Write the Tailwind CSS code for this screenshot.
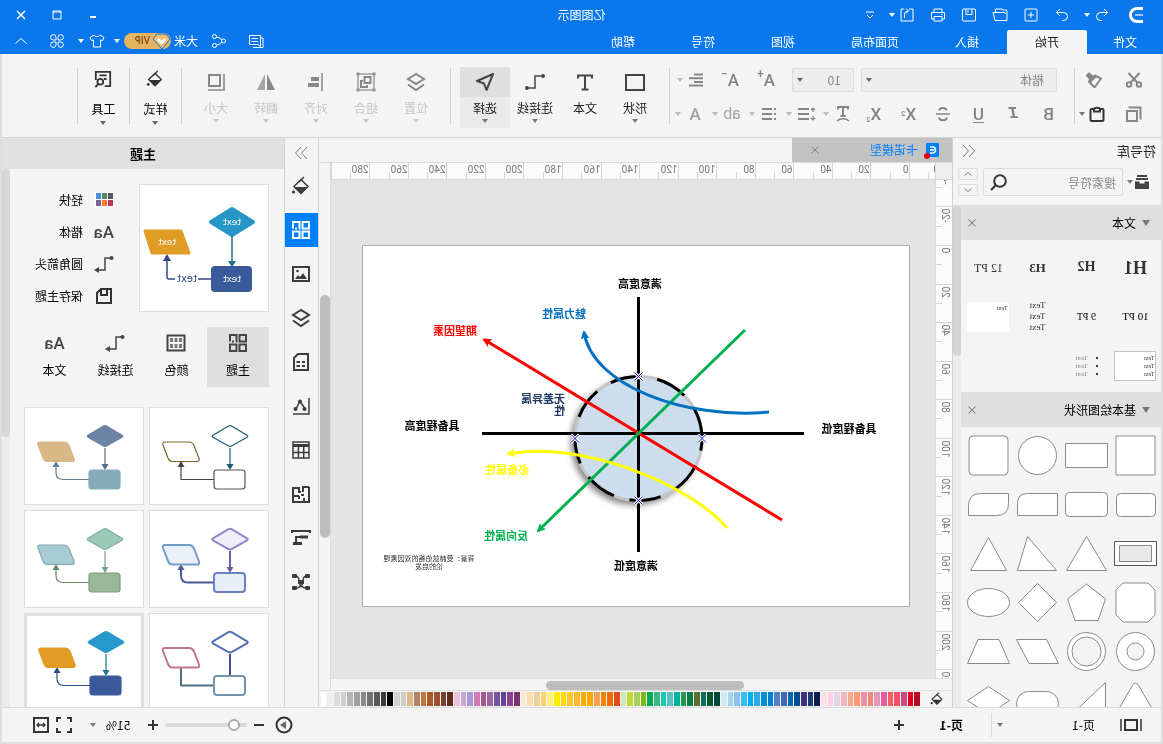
<!DOCTYPE html>
<html lang="zh-CN">
<head>
<meta charset="utf-8">
<title>亿图图示</title>
<script src="https://cdn.jsdelivr.net/npm/@tailwindcss/browser@4"></script>
</head>
<body class="h-screen overflow-hidden bg-[#dedede]">
<svg class="hidden" xmlns="http://www.w3.org/2000/svg">
  <symbol id="undo" viewBox="0 0 16 16"><path d="M6 2 2.500 5.500 6 9M3 5.500h6.500a3.800 3.800 0 0 1 0 8H8"/></symbol>
  <symbol id="redo" viewBox="0 0 16 16"><path d="M10 2l3.500 3.500L10 9M13 5.500H6.500a3.800 3.800 0 0 0 0 8H8"/></symbol>
  <symbol id="newdoc" viewBox="0 0 16 16"><rect x="2" y="2" width="12" height="12" rx="1"/><path d="M8 5v6M5 8h6"/></symbol>
  <symbol id="folder" viewBox="0 0 16 16"><path d="M1 13.500V4a1 1 0 0 1 1-1h3l1-1h6.500v3.500M1 13.500h12l2-8H4L2 6.500"/></symbol>
  <symbol id="save" viewBox="0 0 16 16"><rect x="1.500" y="2" width="13" height="12" rx="1"/><path d="M5 2v5.500h6V2M9 3.500v2"/></symbol>
  <symbol id="print" viewBox="0 0 16 16"><path d="M4 5V2h8v3M4 12H1.500V5.500h13V12H12M4 9.500h8V14H4zM3.500 7.500h1.500"/></symbol>
  <symbol id="export" viewBox="0 0 16 16"><path d="M6 2H2v12h12V2h-3M10.500 11V7.500C10.500 5 8.500 4 6.500 4M9 1.500 6.500 4 9 6.500"/></symbol>
  <symbol id="caret" viewBox="0 0 8 4"><path d="M1 0h6L4 4z" fill="currentColor" stroke="none"/></symbol>
  <symbol id="msg" viewBox="0 0 16 16"><path d="M3.500 2.500h11v9H6l-2.500 2zM1 14.500V5h2.500M1 14.500h10M6 5.500h6.500M6 8.500h6.500"/></symbol>
  <symbol id="share" viewBox="0 0 16 16"><circle cx="3.500" cy="8" r="2"/><circle cx="12.500" cy="3.500" r="2"/><circle cx="12.500" cy="12.500" r="2"/><path d="M5.300 7 7 5l3.500-1M5.300 9 7 11l3.500 1"/></symbol>
  <symbol id="shirt" viewBox="0 0 16 16"><path d="M5 2 1 4.500l1.500 3L4.500 7v7h7V7l2 .500 1.500-3L11 2c-1 2-5 2-6 0z"/></symbol>
  <symbol id="clover" viewBox="0 0 16 16"><path d="M7 7H4.500A2.700 2.700 0 1 1 7 4.500zM9 7V4.500A2.700 2.700 0 1 1 11.500 7zM7 9v2.500A2.700 2.700 0 1 1 4.500 9zM9 9h2.500A2.700 2.700 0 1 1 9 11.500z"/></symbol>
  <symbol id="up" viewBox="0 0 16 16"><path d="M2.500 10.500 8 5.500l5.500 5"/></symbol>
  <symbol id="down" viewBox="0 0 16 16"><path d="M2.500 5.500 8 10.500l5.500-5"/></symbol>
  <symbol id="close" viewBox="0 0 16 16"><path d="M4 4l8 8M12 4l-8 8"/></symbol>
  <symbol id="dbl" viewBox="0 0 16 16"><path d="M8 2 2.500 8 8 14M14 2 8.500 8l5.500 6"/></symbol>
  <symbol id="cut" viewBox="0 0 16 16"><circle cx="3" cy="12.500" r="2.300"/><circle cx="13" cy="12.500" r="2.300"/><path d="M2.500 1 11.500 10.800M13.500 1 4.500 10.800"/></symbol>
  <symbol id="copy" viewBox="0 0 16 16"><rect x="5" y="5" width="10" height="10"/><path d="M2 12.500H1.500V1.500h11V2"/></symbol>
  <symbol id="brush" viewBox="0 0 16 16"><path d="M13 1.500 15 3.500 12 7 9.500 4.500z" fill="currentColor"/><path d="M7 3.500 13 9.500 7.500 15.500 1 6.500z"/><path d="M6 4l7 7" /></symbol>
  <symbol id="paste" viewBox="0 0 16 16"><rect x="1.500" y="3" width="13" height="12" rx="1"/><path d="M5 5.500V3.500C5 1 11 1 11 3.500v2z" fill="#f4f4f4"/></symbol>
  <symbol id="lines" viewBox="0 0 16 16"><path d="M1 2.500h9M1 6.200h14M1 9.900h9M1 13.600h14"/></symbol>
  <symbol id="lineh" viewBox="0 0 20 16"><path d="M7 3h11M7 8h11M7 13h11"/><path d="M3 2v4M3 10v4M1 4l2-2 2 2M1 12l2 2 2-2" stroke-width="1.200"/></symbol>
  <symbol id="list" viewBox="0 0 16 16"><path d="M5 3h10M5 8h10M5 13h10M1 3h2M1 8h2M1 13h2"/></symbol>
  <symbol id="textarc" viewBox="0 0 16 18"><path d="M3 4.500V2h10v2.500M8 2v9M5.500 11h5"/><path d="M2 16c3-3 9-3 12 0" stroke-width="1.500"/></symbol>
  <symbol id="strike" viewBox="0 0 16 16"><path d="M12 4.500C11 1 4.500 1 4.500 4.500M4 11.500C5 15.500 12 15 12 11.500"/><path d="M1 8h14" stroke-width="1.500"/></symbol>
  <symbol id="conn" viewBox="0 0 20 18"><path d="M4 3h6v12h6" /><circle cx="2" cy="3" r="2" fill="currentColor" stroke="none"/><circle cx="18" cy="15" r="2" fill="currentColor" stroke="none"/></symbol>
  <symbol id="conn2" viewBox="0 0 20 18"><path d="M4 3h5v12h7" stroke-width="1.500"/><circle cx="2.500" cy="3" r="2" fill="currentColor" stroke="none"/><path d="M15 12v6l5-3z" fill="currentColor" stroke="none"/></symbol>
  <symbol id="point" viewBox="0 0 20 20"><path d="M2 2 18 9 11 11.500 8.500 18z" stroke-linejoin="round"/></symbol>
  <symbol id="layers" viewBox="0 0 20 20"><path d="M10 2 18 7l-8 5-8-5zM2 12.500l8 5.500 8-5.500"/></symbol>
  <symbol id="group" viewBox="0 0 20 20"><g stroke-width="1.200"><rect x="2" y="2" width="16" height="16"/><g fill="#f4f4f4"><circle cx="2" cy="2" r="1.200"/><circle cx="18" cy="2" r="1.200"/><circle cx="2" cy="18" r="1.200"/><circle cx="18" cy="18" r="1.200"/></g></g><rect x="5.500" y="5" width="6" height="6"/><path d="M13 9h2v6H9v-2"/></symbol>
  <symbol id="align" viewBox="0 0 20 20"><path d="M4 1v18" stroke-width="1.500"/><g fill="currentColor" stroke="none"><rect x="7" y="5" width="8" height="4"/><rect x="7" y="11" width="11" height="4"/></g></symbol>
  <symbol id="flip" viewBox="0 0 20 20"><path d="M9 2v16H1z" fill="currentColor" stroke="none"/><path d="M11 2v16h8z" fill="currentColor" fill-opacity=".75" stroke="none"/></symbol>
  <symbol id="size" viewBox="0 0 20 20"><rect x="6" y="3" width="11" height="11"/><path d="M2 2v16h16" stroke-width="1.600"/></symbol>
  <symbol id="bucket" viewBox="0 0 20 20"><path d="M10 3.500 17 10.500 10 17.500 3 10.500zM7 1l5 5"/><path d="M3 11h14l-7 7z" fill="currentColor" stroke="none"/><circle cx="17.500" cy="16" r="1.600" fill="currentColor" stroke="none"/></symbol>
  <symbol id="tools" viewBox="0 0 20 20"><path d="M8 18H2V2h16v9M6 6h8M6 10h3"/><circle cx="13" cy="13" r="3.200"/><path d="M15.200 15.500 18.500 19"/></symbol>
  <symbol id="find" viewBox="0 0 18 18"><circle cx="8" cy="8" r="5.800"/><path d="m12 12 5 5"/></symbol>
  <symbol id="box" viewBox="0 0 16 16"><g fill="currentColor" stroke="none"><path d="M3 1h10v2H3zM2 4h12v2H2z"/><path d="M1 7.500h4.500v2h5v-2H15V15H1z"/></g></symbol>
  <symbol id="theme" viewBox="0 0 20 20"><rect x="2" y="2" width="6.500" height="6.500"/><rect x="11.500" y="2" width="6.500" height="6.500" stroke-dasharray="13 2 2 2 7"/><rect x="2" y="11.500" width="6.500" height="6.500"/><rect x="11.500" y="11.500" width="6.500" height="6.500"/></symbol>
  <symbol id="image" viewBox="0 0 20 20"><rect x="2" y="3" width="16" height="14"/><path d="M4 15l4-6 3 4 2-2 3 4z" fill="currentColor" stroke="none"/><circle cx="13.500" cy="7" r="1.300" fill="currentColor" stroke="none"/></symbol>
  <symbol id="doc" viewBox="0 0 20 20"><path d="M3 2h10l4 4v12H3zM6 10h3M11 10h3.500M6 14h3M11 14h3.500"/></symbol>
  <symbol id="chart" viewBox="0 0 20 20"><path d="M2 2v16h16M6 13l5-8 4 8" /><g fill="currentColor" stroke="none"><circle cx="6.500" cy="13" r="2"/><circle cx="11" cy="5.500" r="2"/><circle cx="15.500" cy="13" r="2"/></g></symbol>
  <symbol id="table" viewBox="0 0 20 20"><rect x="2" y="2" width="16" height="16"/><path d="M2 5.500h16" stroke-width="3"/><path d="M2 12.500h16M7.300 7v11M12.600 7v11"/></symbol>
  <symbol id="plan" viewBox="0 0 20 20"><path d="M2 3h6v5M2 3v15h16V4h-6v4h-2M7 14v4M7 11h3M12 12h6M12 12v3"/></symbol>
  <symbol id="gantt" viewBox="0 0 20 20"><path d="M1 3h18M1 2v3M19 2v3M10 9H15v5" stroke-width="2"/><path d="M9 15.500h9M3 9h8" stroke-width="3"/></symbol>
  <symbol id="mind" viewBox="0 0 20 20"><path d="M4 4c6 0 2 6 6 6s0 6-6 6M16 4c-6 0-2 6-6 6s0 6 6 6" stroke-width="1.400"/><g fill="currentColor" stroke="none"><rect x="1" y="2" width="5" height="4" rx="1"/><rect x="14" y="2" width="5" height="4" rx="1"/><rect x="1" y="14" width="5" height="4" rx="1"/><rect x="14" y="14" width="5" height="4" rx="1"/><rect x="7" y="8" width="6" height="4"/></g></symbol>
  <symbol id="palette" viewBox="0 0 20 18"><rect x="1.500" y="1.500" width="17" height="15"/><g fill="#777" stroke="none"><rect x="4" y="4" width="3" height="4"/><rect x="8.500" y="4" width="3" height="4"/><rect x="13" y="4" width="3" height="4"/><rect x="4" y="10" width="3" height="4"/><rect x="8.500" y="10" width="3" height="4"/><rect x="13" y="10" width="3" height="4"/></g></symbol>
  <symbol id="save2" viewBox="0 0 18 18"><path d="M2 2h10l4 4v10H2zM6 2v6h6V3"/></symbol>
  <symbol id="pages" viewBox="0 0 22 14"><path d="M1 1v12M21 1v12" stroke-width="1.500"/><rect x="5" y="2" width="12" height="10"/></symbol>
  <symbol id="full" viewBox="0 0 16 16"><path d="M1 5V1h4M11 1h4v4M15 11v4h-4M5 15H1v-4"/></symbol>
  <symbol id="fit" viewBox="0 0 16 16"><rect x="1" y="1" width="14" height="14"/><path d="M4 8h8M6 6 4 8l2 2M10 6l2 2-2 2" stroke-width="1.400"/></symbol>
  <symbol id="play" viewBox="0 0 18 18"><circle cx="9" cy="9" r="7.500"/><path d="M7 5v8l6-4z" fill="#666" stroke="none"/></symbol>
</svg>

<!-- The whole window is shown mirrored left to right -->
<div class="flex h-screen -scale-x-100 flex-col overflow-hidden pb-0.5 font-['Noto_Sans_CJK_SC',sans-serif] text-xs text-[#222]">
  <header class="shrink-0 bg-[#0a77ec] text-white">
    <div class="grid h-[30px] grid-cols-[1fr_auto_1fr] items-center">
      <div class="flex items-center pl-[19px]">
        <svg class="h-4 w-4 shrink-0 fill-none" viewBox="0 0 16 16"><path d="M1 1.500h6a6.500 6.500 0 0 1 0 13H1" stroke="#fff" stroke-width="3"/><path d="M1 8h8" stroke="#9cc9fa" stroke-width="2"/></svg>
        <button aria-label="撤销" class="ml-[18px] w-4"><svg class="size-4 fill-none stroke-current"><use href="#undo"/></svg></button>
        <button aria-label="撤销列表" class="ml-[3px] w-2"><svg class="h-1 w-2"><use href="#caret"/></svg></button>
        <button aria-label="重做" class="ml-[13px] w-4"><svg class="size-4 fill-none stroke-current"><use href="#redo"/></svg></button>
        <div class="ml-[15px] flex gap-[15px]">
          <button aria-label="新建"><svg class="size-4 fill-none stroke-current"><use href="#newdoc"/></svg></button>
          <button aria-label="打开"><svg class="size-4 fill-none stroke-current"><use href="#folder"/></svg></button>
          <button aria-label="保存"><svg class="size-4 fill-none stroke-current"><use href="#save"/></svg></button>
          <button aria-label="打印"><svg class="size-4 fill-none stroke-current"><use href="#print"/></svg></button>
          <button aria-label="导出"><svg class="size-4 fill-none stroke-current"><use href="#export"/></svg></button>
        </div>
        <button aria-label="导出列表" class="ml-[3px] w-2"><svg class="h-1 w-2"><use href="#caret"/></svg></button>
        <button aria-label="更多" class="ml-[14px] w-2"><svg class="h-2 w-2 fill-none stroke-current" viewBox="0 0 8 8"><path d="M0 1h8M1 4l3 3 3-3"/></svg></button>
      </div>
      <h1>亿图图示</h1>
      <div class="flex items-center justify-end gap-5 pr-[13px]">
        <button aria-label="最小化"><svg class="size-4 fill-none stroke-current" viewBox="0 0 16 16"><path d="M5 10h6" stroke-width="2"/></svg></button>
        <button aria-label="最大化"><svg class="size-4 fill-none stroke-current" viewBox="0 0 16 16"><path d="M4 4h8v8H4zM4 5h8"/></svg></button>
        <button aria-label="关闭"><svg class="size-4 fill-none stroke-current" viewBox="0 0 16 16"><path d="m4 4 8 8m0-8-8 8" stroke-width="1.400"/></svg></button>
      </div>
    </div>
    <div class="flex h-6 items-stretch">
      <nav class="flex">
        <button class="w-19 leading-6">文件</button>
        <button class="w-20 rounded-t-xs bg-[#f4f4f4] leading-6 text-[#222]">开始</button>
        <button class="px-7 leading-6">插入</button>
        <button class="px-7 leading-6">页面布局</button>
        <button class="px-7 leading-6">视图</button>
        <button class="px-7 leading-6">符号</button>
        <button class="px-7 leading-6">帮助</button>
      </nav>
      <div class="ml-auto flex items-center pr-[13px] pb-0.5">
        <button aria-label="评论" class="mr-[21px]"><svg class="size-4 fill-none stroke-current"><use href="#msg"/></svg></button>
        <button aria-label="分享" class="mr-[13px]"><svg class="size-4 fill-none stroke-current"><use href="#share"/></svg></button>
        <a href="#" class="mr-[3px]">大米</a>
        <a href="#" class="flex h-4 w-[47px] items-center rounded-full bg-[#e6b562] font-['Open_Sans',sans-serif] text-[10px] font-semibold text-[#7a4a12]">
          <svg class="h-4 w-[19px] fill-none" viewBox="0 0 19 16"><path d="M5 1h9l4 5-9 10L1 6z" fill="#f0be68" stroke="#0a77ec"/><path d="m5.500 6 4 4 4-4" stroke="#fff" stroke-width="2.500"/></svg>
          <span class="pl-0.5">VIP</span>
        </a>
        <svg class="mr-1 ml-[3px] h-1 w-2"><use href="#caret"/></svg>
        <button aria-label="皮肤" class="ml-1"><svg class="size-4 fill-none stroke-current"><use href="#shirt"/></svg></button>
        <svg class="ml-1 h-1 w-2"><use href="#caret"/></svg>
        <button aria-label="应用" class="ml-3"><svg class="size-4 fill-none stroke-current"><use href="#clover"/></svg></button>
        <button aria-label="收起" class="ml-5"><svg class="size-4 fill-none stroke-current"><use href="#up"/></svg></button>
      </div>
    </div>
  </header>

  <div class="mx-0.5 flex min-h-0 flex-1 flex-col bg-[#f4f4f4]">
    <!-- Ribbon -->
    <section class="flex h-[84px] shrink-0 items-start border-b border-[#d0d0d0] pt-3.5 text-[#858585]">
      <div class="flex h-14 flex-col gap-2.5 border-r border-[#cdcdcd] pr-[3px] pl-[11px]">
        <div class="flex gap-2">
          <button aria-label="剪切" class="flex h-6 w-8 items-center justify-center"><svg class="size-4 fill-none stroke-current stroke-2"><use href="#cut"/></svg></button>
          <button aria-label="格式刷" class="flex h-6 w-8 items-center justify-center"><svg class="size-4 fill-none stroke-current stroke-2"><use href="#brush"/></svg></button>
        </div>
        <div class="flex">
          <button aria-label="复制" class="flex h-6 w-8 items-center justify-center"><svg class="size-4 fill-none stroke-current stroke-2"><use href="#copy"/></svg></button>
          <button aria-label="粘贴" class="ml-[13px] flex h-6 items-center gap-[3px] text-[#333]"><svg class="size-4 fill-none stroke-current stroke-2"><use href="#paste"/></svg><svg class="h-1 w-2 text-[#777]"><use href="#caret"/></svg></button>
        </div>
      </div>
      <div class="flex h-14 flex-col gap-2.5 border-r border-[#cdcdcd] pr-1 pl-2">
        <div class="flex pl-[9px]">
          <div class="relative"><select aria-label="字体" class="h-6 w-49 appearance-none rounded-xs border border-[#dcdcdc] bg-[#ededed] pl-3 text-[#888]"><option>楷体</option></select><svg class="pointer-events-none absolute top-2.5 right-1 h-1 w-2 text-[#666]"><use href="#caret"/></svg></div>
          <div class="relative ml-[7px]"><select aria-label="字号" class="h-6 w-[62px] appearance-none rounded-xs border border-[#dcdcdc] bg-[#ededed] pl-3 text-[#888]"><option>10</option></select><svg class="pointer-events-none absolute top-2.5 right-1 h-1 w-2 text-[#666]"><use href="#caret"/></svg></div>
          <button aria-label="增大字号" class="ml-2 flex h-6 w-9 items-center justify-center font-['Roboto',sans-serif] text-[17px] font-medium">A<sup class="text-[12px]">+</sup></button>
          <button aria-label="减小字号" class="flex h-6 w-9 items-center justify-center font-['Roboto',sans-serif] text-[17px] font-medium">A<sup class="text-[12px]">−</sup></button>
          <button aria-label="对齐文本" class="flex h-6 w-9 items-center justify-end gap-1"><svg class="size-4 fill-none stroke-current stroke-2"><use href="#lines"/></svg><svg class="h-1 w-2 text-[#bbb]"><use href="#caret"/></svg></button>
        </div>
        <div class="flex font-['Roboto',sans-serif] text-[17px] leading-6">
          <button class="w-[35px] font-medium" aria-label="加粗">B</button>
          <button class="w-[35px] font-['Liberation_Mono',monospace] font-bold italic" aria-label="斜体">I</button>
          <button class="w-[35px] font-medium underline underline-offset-2" aria-label="下划线">U</button>
          <button class="flex w-[35px] items-center justify-center" aria-label="删除线"><svg class="size-4 fill-none stroke-current stroke-2"><use href="#strike"/></svg></button>
          <button class="w-[35px] font-medium" aria-label="上标">X<sup class="text-[8px]">2</sup></button>
          <button class="w-[35px] font-medium" aria-label="下标">X<sub class="text-[8px]">2</sub></button>
          <button class="mr-[3px] flex h-6 items-center" aria-label="文字样式"><svg class="mx-[5px] h-[18px] w-4 fill-none stroke-current stroke-2"><use href="#textarc"/></svg><svg class="h-1 w-2 text-[#bbb]"><use href="#caret"/></svg></button>
          <button class="mr-[3px] flex h-6 items-center" aria-label="行距"><svg class="mx-[3px] h-4 w-5 fill-none stroke-current stroke-2"><use href="#lineh"/></svg><svg class="h-1 w-2 text-[#bbb]"><use href="#caret"/></svg></button>
          <button class="mr-[3px] flex h-6 items-center" aria-label="列表"><svg class="mx-[5px] size-4 fill-none stroke-current stroke-2"><use href="#list"/></svg><svg class="h-1 w-2 text-[#bbb]"><use href="#caret"/></svg></button>
          <button class="mr-[3px] flex h-6 items-center text-[#a5a5a5]" aria-label="突出显示"><span class="w-[26px] text-[16px]">ab</span><svg class="h-1 w-2 text-[#bbb]"><use href="#caret"/></svg></button>
          <button class="flex h-6 items-center text-[#a0a0a0]" aria-label="字体颜色"><span class="w-[26px] font-medium">A</span><svg class="h-1 w-2 text-[#bbb]"><use href="#caret"/></svg></button>
        </div>
      </div>
      <div class="flex h-14 items-start border-r border-[#cdcdcd] px-[9px] text-[#222]">
        <button class="-mt-px flex h-[61px] w-[50px] flex-col items-center"><span class="flex h-7.5 items-center"><svg class="size-5 fill-none stroke-[#444] stroke-2" viewBox="0 0 20 20"><rect x="1" y="3" width="18" height="15"/></svg></span><span class="my-0.5 leading-4.5">形状</span><svg class="h-1 w-2 shrink-0 text-[#777]"><use href="#caret"/></svg></button>
        <button class="-mt-px flex h-[61px] w-[50px] flex-col items-center"><span class="flex h-7.5 items-center"><svg class="size-5 fill-none stroke-[#444] stroke-2" viewBox="0 0 20 20"><path d="M3 6.500V3.500h14v3M10 3.500v14M6.500 17.500h7"/></svg></span><span class="my-0.5 leading-4.5">文本</span></button>
        <button class="-mt-px flex h-[61px] w-[50px] flex-col items-center"><span class="flex h-7.5 items-center"><svg class="h-[18px] w-5 fill-none stroke-current text-[#444] stroke-[1.5]"><use href="#conn"/></svg></span><span class="my-0.5 leading-4.5">连接线</span><svg class="h-1 w-2 shrink-0 text-[#777]"><use href="#caret"/></svg></button>
        <button class="-mt-px flex h-[61px] w-[50px] flex-col items-center rounded-xs bg-[#eaeaea]"><span class="flex h-7.5 w-full items-center justify-center bg-[#dfdfdf]"><svg class="size-5 fill-none stroke-[#444] stroke-2"><use href="#point"/></svg></span><span class="my-0.5 leading-4.5">选择</span><svg class="h-1 w-2 shrink-0 text-[#777]"><use href="#caret"/></svg></button>
      </div>
      <div class="flex h-14 items-start border-r border-[#cdcdcd] px-[9px] text-[#c6c6c6]">
        <button disabled class="-mt-px flex h-[61px] w-[50px] flex-col items-center"><span class="flex h-7.5 items-center"><svg class="size-5 fill-none stroke-[#888] stroke-2"><use href="#layers"/></svg></span><span class="my-0.5 leading-4.5">位置</span><svg class="h-1 w-2 shrink-0"><use href="#caret"/></svg></button>
        <button disabled class="-mt-px flex h-[61px] w-[50px] flex-col items-center"><span class="flex h-7.5 items-center"><svg class="size-5 fill-none stroke-[#888] stroke-2"><use href="#group"/></svg></span><span class="my-0.5 leading-4.5">组合</span><svg class="h-1 w-2 shrink-0"><use href="#caret"/></svg></button>
        <button disabled class="-mt-px flex h-[61px] w-[50px] flex-col items-center"><span class="flex h-7.5 items-center"><svg class="size-5 fill-none stroke-current text-[#888]"><use href="#align"/></svg></span><span class="my-0.5 leading-4.5">对齐</span><svg class="h-1 w-2 shrink-0"><use href="#caret"/></svg></button>
        <button disabled class="-mt-px flex h-[61px] w-[50px] flex-col items-center"><span class="flex h-7.5 items-center"><svg class="size-5 text-[#888]"><use href="#flip"/></svg></span><span class="my-0.5 leading-4.5">翻转</span><svg class="h-1 w-2 shrink-0"><use href="#caret"/></svg></button>
        <button disabled class="-mt-px flex h-[61px] w-[50px] flex-col items-center"><span class="flex h-7.5 items-center"><svg class="size-5 fill-none stroke-[#888] stroke-2"><use href="#size"/></svg></span><span class="my-0.5 leading-4.5">大小</span><svg class="h-1 w-2 shrink-0"><use href="#caret"/></svg></button>
      </div>
      <div class="flex h-14 items-start border-r border-[#cdcdcd] text-black">
        <button class="-mt-px flex h-[61px] w-[51px] flex-col items-center"><span class="flex h-6 items-center"><svg class="size-[18px] fill-none stroke-current text-[#333] stroke-[1.5]"><use href="#bucket"/></svg></span><span class="mt-[9px] mb-[3px] leading-4.5">样式</span><svg class="h-1 w-2 shrink-0 text-[#666]"><use href="#caret"/></svg></button>
      </div>
      <div class="flex h-14 items-start border-r border-[#cdcdcd] text-black">
        <button class="-mt-px flex h-[61px] w-[51px] flex-col items-center"><span class="flex h-6 items-center"><svg class="size-[18px] fill-none stroke-[#333] stroke-2"><use href="#tools"/></svg></span><span class="mt-[9px] mb-[3px] leading-4.5">工具</span><svg class="h-1 w-2 shrink-0 text-[#666]"><use href="#caret"/></svg></button>
      </div>
    </section>

    <div class="flex min-h-0 flex-1">
      <!-- Symbol library -->
      <aside class="flex w-[209px] shrink-0 flex-col border-r border-[#cfcfcf]">
        <div class="flex h-[26px] items-center justify-between pr-2 pl-[5px]"><h2 class="text-[13px]">符号库</h2><button aria-label="折叠"><svg class="size-4 fill-none stroke-[#777]"><use href="#dbl"/></svg></button></div>
        <div class="flex h-[41px] items-start gap-[5px] pt-1 pl-[11px]">
          <button aria-label="符号库菜单" class="flex h-7 w-[22px] items-center"><svg class="size-4 shrink-0 text-[#444]"><use href="#box"/></svg><svg class="h-1 w-2 shrink-0 text-[#777]"><use href="#caret"/></svg></button>
          <label class="flex h-7 w-[140px] items-center rounded-xs border border-[#dcdcdc] pr-1.5"><input aria-label="搜索符号" placeholder="搜索符号" class="h-6 w-full min-w-0 bg-transparent pl-1.5 outline-none placeholder:text-[#888]"><svg class="size-[18px] shrink-0 fill-none stroke-[#333] stroke-2"><use href="#find"/></svg></label>
          <div class="flex flex-col gap-1"><button aria-label="上一个" class="flex h-3 w-5 items-center justify-center rounded-xs border border-[#dcdcdc]"><svg class="size-2.5 fill-none stroke-[#666] stroke-[1.5]"><use href="#up"/></svg></button><button aria-label="下一个" class="flex h-3 w-5 items-center justify-center rounded-xs border border-[#dcdcdc]"><svg class="size-2.5 fill-none stroke-[#666] stroke-[1.5]"><use href="#down"/></svg></button></div>
        </div>
        <div class="flex min-h-0 flex-1">
          <div class="min-w-0 flex-1 overflow-hidden">
            <div class="flex h-[35px] items-center bg-[#dfdfdf] pr-1 pl-[11px] text-black"><svg class="mr-1.5 h-1.5 w-2 text-[#777]" viewBox="0 0 8 6"><path d="M0 0h8L4 6z" fill="currentColor"/></svg>文本<button aria-label="关闭文本" class="ml-auto"><svg class="size-3.5 fill-none stroke-[#777] stroke-[1.2]"><use href="#close"/></svg></button></div>
            <div class="grid h-[152px] auto-rows-[49px] grid-cols-[repeat(4,49px)] place-items-center pt-[3px] pl-px font-['Liberation_Serif',serif] text-[#333]">
              <b class="text-[18px]">H1</b><b class="text-[14px]">H2</b><b class="text-[13px]">H3</b><span class="text-[12px] text-nowrap">12 PT</span>
              <span class="text-[11px] text-black">10 PT</span><span class="text-[10px] text-black">9 PT</span><span class="text-[9px] leading-[11px]">Text<br>Text<br>Text</span><span class="h-7.5 w-[42px] bg-white px-0.5 py-0.5 text-[6px] leading-2">Text</span>
              <span class="h-7.5 w-[42px] border border-[#c4c4c4] bg-white px-px py-0.5 text-[6px] leading-2">Text<br>Text<br>Text</span>
              <ul class="list-inside list-disc text-[7px] leading-2 text-[#888] marker:text-black"><li>Text</li><li>Text</li><li>Text</li></ul>
            </div>
            <div class="flex h-[35px] items-center bg-[#dfdfdf] pr-1 pl-[11px] text-black"><svg class="mr-1.5 h-1.5 w-2 text-[#777]" viewBox="0 0 8 6"><path d="M0 0h8L4 6z" fill="currentColor"/></svg>基本绘图形状<button aria-label="关闭基本绘图形状" class="ml-auto"><svg class="size-3.5 fill-none stroke-[#777] stroke-[1.2]"><use href="#close"/></svg></button></div>
            <div id="shapes" class="grid auto-rows-[49px] grid-cols-[repeat(4,49px)] pt-1 pl-px"></div>
          </div>
          <div class="w-2 shrink-0 bg-[#ececec]"><div class="h-[151px] rounded-full bg-[#d4d4d4]"></div></div>
        </div>
      </aside>

      <!-- Document -->
      <main class="flex min-w-0 flex-1 flex-col">
        <div class="flex h-[25px] shrink-0 border-b border-[#dadada]">
          <div class="flex w-[160px] items-center bg-[#c3c3c3] pl-3 text-[#0080ff]">
            <span class="relative mr-2 block size-3.5"><svg class="size-3.5" viewBox="0 0 14 14"><rect x="1" width="13" height="14" rx="1" fill="#0080ff"/><path d="M10 4H7.500a3 3 0 0 0 0 6H10M6 7h4" fill="none" stroke="#fff" stroke-width="1.500"/></svg><i class="absolute -right-0.5 -bottom-0.5 size-1.5 rounded-full bg-red-600"></i></span>
            卡诺模型<button aria-label="关闭文档" class="mr-4 ml-auto"><svg class="size-3.5 fill-none stroke-[#777]"><use href="#close"/></svg></button>
          </div>
        </div>
        <div class="flex min-h-0 flex-1">
          <div class="flex min-w-0 flex-1 flex-col">
            <div class="flex h-[17px] shrink-0 border-b border-[#dadada] bg-[#fbfbfb]">
              <div class="w-[17px] shrink-0 border-r border-[#dadada] bg-[#efefef]"></div>
              <svg id="hruler" class="h-4 min-w-0 flex-1 font-['Roboto',sans-serif] text-[10px]"></svg>
            </div>
            <div class="flex min-h-0 flex-1">
              <svg id="vruler" class="h-full w-[17px] shrink-0 border-r border-[#dadada] bg-[#fbfbfb] font-['Roboto',sans-serif] text-[10px]"></svg>
              <div class="min-w-0 flex-1 overflow-hidden bg-[#e4e4e4] pt-[65px] pl-[25px]">
                <svg class="h-[362px] w-[548px] border border-[#b0b0b0] bg-white text-[11px] font-bold" viewBox="255 246 546 360">
                  <defs>
                    <filter id="soft" x="-20%" y="-20%" width="140%" height="140%"><feGaussianBlur stdDeviation="3"/></filter>
                    <marker id="head" viewBox="0 0 10 10" refX="8" refY="5" markerWidth="9" markerHeight="9" markerUnits="userSpaceOnUse" orient="auto"><path d="M0 0 10 5 0 10 2.500 5z" fill="context-stroke"/></marker>
                  </defs>
                  <ellipse cx="529" cy="442" rx="64" ry="63" fill="#000" fill-opacity=".5" filter="url(#soft)"/>
                  <ellipse cx="525.500" cy="438.500" rx="63.500" ry="62" fill="#ccddee" stroke="#c6c6c6" stroke-width="3"/>
                  <path d="M462 438.500a63.500 62 0 1 1 127 0a63.500 62 0 1 1 -127 0" pathLength="360" fill="none" stroke="#000" stroke-width="3" stroke-dasharray="29 14.600"/>
                  <g fill="none" stroke-width="3">
                    <path d="M525.500 297v255M360 433.500h322" stroke="#000"/>
                    <path d="M382 520 680 339.500" stroke="#f00" marker-end="url(#head)"/>
                    <path d="M419 330 626 531" stroke="#00b050" marker-end="url(#head)"/>
                    <path d="M395 412C480 420 572 385 580 332" stroke="#0070c0" marker-end="url(#head)"/>
                    <path d="M437 528C475 483 585 440 656 454" stroke="#ff0" marker-end="url(#head)"/>
                  </g>
                  <g id="x" fill="none"><path d="M521.500 372.500l8 8m0-8-8 8" stroke="#fff" stroke-width="3"/><path d="M521.500 372.500l8 8m0-8-8 8" stroke="#11c"/></g>
                  <use href="#x" y="124"/><use href="#x" x="-63.500" y="62"/><use href="#x" x="63.500" y="62"/>
                  <g text-anchor="middle">
                    <text x="524" y="288">满意度高</text>
                    <text x="600" y="318" fill="#0070c0">魅力属性</text>
                    <text x="709" y="335" fill="#f00">期望因素</text>
                    <text x="732" y="430">具备程度高</text>
                    <text x="315" y="433">具备程度低</text>
                    <text x="657" y="474" fill="#ff0">必备属性</text>
                    <text x="658" y="540" fill="#00b050">反向属性</text>
                    <text x="528" y="570">满意度低</text>
                    <g class="text-[7px] font-normal" fill="#333"><text x="735" y="561">背景：受赫兹伯格的双因素理</text><text x="735" y="569">论的启发</text></g>
                  </g>
                  <g fill="#1f3864"><text x="599" y="403">无差异属</text><text x="599" y="415">性</text></g>
                </svg>
              </div>
            </div>
            <div class="h-3 shrink-0 border-t border-[#e0e0e0] pt-0.5"><div class="ml-[208px] h-[9px] w-[198px] rounded-full bg-[#bdbdbd]"></div></div>
          </div>
          <div class="w-3 shrink-0 border-l border-[#dadada] pt-[132px]"><div class="h-[243px] w-2.5 rounded-full bg-[#bdbdbd]"></div></div>
        </div>
        <div class="flex h-[17px] shrink-0 items-center border-t border-[#e0e0e0]">
          <svg class="ml-2 size-3.5 shrink-0 fill-none stroke-current text-[#333] stroke-[1.5]"><use href="#bucket"/></svg>
          <div id="swatches" class="ml-2.5 flex h-3.5 min-w-0 flex-1"></div>
        </div>
      </main>

      <!-- Tool rail -->
      <nav class="flex w-[35px] shrink-0 flex-col items-center border-x border-[#d4d4d4] text-[#3c3c3c]">
        <button aria-label="展开" class="flex h-[26px] shrink-0 items-center pt-1"><svg class="size-4 fill-none stroke-[#777]" viewBox="0 0 16 16"><path d="m2 2 5.500 6L2 14M8 2l5.500 6L8 14"/></svg></button>
        <button aria-label="填充" class="flex h-11 items-center"><svg class="size-5 fill-none stroke-current stroke-[1.5]"><use href="#bucket"/></svg></button>
        <span class="flex h-11 w-full items-center"><button aria-label="主题" class="flex h-[34px] w-full items-center justify-center bg-[#0080ff]"><svg class="size-5 fill-none stroke-white stroke-2"><use href="#theme"/></svg></button></span>
        <button aria-label="图片" class="flex h-11 items-center"><svg class="size-5 fill-none stroke-current stroke-2"><use href="#image"/></svg></button>
        <button aria-label="图层" class="flex h-11 items-center"><svg class="size-5 fill-none stroke-current stroke-2"><use href="#layers"/></svg></button>
        <button aria-label="页面" class="flex h-11 items-center"><svg class="size-5 fill-none stroke-current stroke-2"><use href="#doc"/></svg></button>
        <button aria-label="图表" class="flex h-11 items-center"><svg class="size-5 fill-none stroke-current stroke-[1.5]"><use href="#chart"/></svg></button>
        <button aria-label="表格" class="flex h-11 items-center"><svg class="size-5 fill-none stroke-current stroke-[1.5]"><use href="#table"/></svg></button>
        <button aria-label="平面图" class="flex h-11 items-center"><svg class="size-5 fill-none stroke-current stroke-2"><use href="#plan"/></svg></button>
        <button aria-label="甘特图" class="flex h-11 items-center"><svg class="size-5 fill-none stroke-current stroke-2"><use href="#gantt"/></svg></button>
        <button aria-label="思维导图" class="flex h-11 items-center"><svg class="size-5 fill-none stroke-current stroke-2"><use href="#mind"/></svg></button>
      </nav>

      <!-- Theme panel -->
      <aside class="flex w-[282px] shrink-0 flex-col text-black">
        <h2 class="h-[31px] shrink-0 bg-[#e0e0e0] text-center text-[13px] leading-8 font-bold">主题</h2>
        <div class="flex min-h-0 flex-1">
          <div class="min-w-0 flex-1 overflow-hidden pt-[15px] pl-[15px]">
            <div class="flex">
              <svg class="h-32 w-[130px] border border-[#dedede] bg-white font-['DejaVu_Sans',sans-serif] text-[9px]" viewBox="1 1 128 126">
                <path d="M37 25 58 38 37 51 16 38z" fill="#2797c8" stroke="#2797c8" stroke-width="4" stroke-linejoin="round"/>
                <path d="M37 52v25" stroke="#1d6f87" stroke-width="1.500"/><path d="M33 77h8l-4 6z" fill="#1d6f87"/>
                <rect x="17" y="82" width="41" height="26" rx="4" fill="#3a5a9c"/>
                <path d="M58 95h42q2 0 2-2V76" fill="none" stroke="#2f4a86" stroke-width="1.500"/><path d="M98 77h8l-4-7z" fill="#2f4a86"/>
                <path d="M88 47h36l-7 22H80z" fill="#e09c25" stroke="#e09c25" stroke-width="3" stroke-linejoin="round"/>
                <rect x="71" y="90" width="23" height="10" fill="#fff"/>
                <g text-anchor="middle" fill="#fff"><text x="37" y="41">text</text><text x="37" y="98">text</text><text x="102" y="61">text</text><text x="82" y="98" fill="#2f4a86" class="text-[10px]">text</text></g>
              </svg>
              <div class="flex flex-col pl-[25px]">
                <button class="flex h-8 items-center"><svg class="h-4 w-5" viewBox="0 0 20 16"><path d="M0 0h20v16H0z" fill="#fff"/><path d="M1 1h5v6H1z" fill="#555b66"/><path d="M7 1h5v6H7z" fill="#558a62"/><path d="M13 1h5v6h-5z" fill="#4a90e2"/><path d="M1 8h5v6H1z" fill="#b83a60"/><path d="M7 8h5v6H7z" fill="#f97a2c"/><path d="M13 8h5v6h-5z" fill="#7d6390"/></svg><span class="ml-[11px]">轻快</span></button>
                <button class="flex h-8 items-center"><span class="w-[31px] text-left font-['Roboto',sans-serif] text-[17px] font-medium text-[#444]">Aa</span><span>楷体</span></button>
                <button class="flex h-8 items-center"><svg class="mr-[11px] h-[18px] w-5 fill-none stroke-current text-[#444]"><use href="#conn2"/></svg>圆角箭头</button>
                <button class="flex h-8 items-center"><svg class="mr-3 ml-px size-[18px] fill-none stroke-[#333] stroke-2"><use href="#save2"/></svg>保存主题</button>
              </div>
            </div>
            <div class="mt-[15px] flex">
              <button class="flex h-15 w-[62px] flex-col items-center bg-[#dedede] pt-1.5"><svg class="size-5 fill-none stroke-[#444] stroke-2"><use href="#theme"/></svg><span class="mt-[9px]">主题</span></button>
              <button class="flex h-15 w-[61px] flex-col items-center pt-1.5"><svg class="my-px h-[18px] w-5 fill-none stroke-[#444] stroke-2"><use href="#palette"/></svg><span class="mt-[9px]">颜色</span></button>
              <button class="flex h-15 w-[61px] flex-col items-center pt-1.5"><svg class="my-px h-[18px] w-5 fill-none stroke-current text-[#444]"><use href="#conn2"/></svg><span class="mt-[9px]">连接线</span></button>
              <button class="flex h-15 w-[61px] flex-col items-center pt-1.5"><span class="h-5 font-['Roboto',sans-serif] text-[17px] leading-5 font-medium text-[#444]">Aa</span><span class="mt-[9px]">文本</span></button>
            </div>
            <div id="themes" class="mt-5 grid grid-cols-[repeat(2,120px)] gap-[5px]"></div>
          </div>
          <div class="w-2 shrink-0 bg-[#ececec]"><div class="h-[268px] rounded-full bg-[#d6d6d6]"></div></div>
        </div>
      </aside>
    </div>

    <!-- Status bar -->
    <footer class="flex h-[35px] shrink-0 items-center border-t border-[#dadada] text-black">
      <svg class="ml-[19px] h-3.5 w-[22px] shrink-0 fill-none stroke-[#333] stroke-2"><use href="#pages"/></svg>
      <div class="relative ml-[25px] flex h-6 w-[103px] items-center"><select aria-label="页面" class="h-6 w-full appearance-none"><option>页-1</option></select><svg class="pointer-events-none absolute right-1 h-1 w-2 text-[#777]"><use href="#caret"/></svg></div>
      <div class="h-6 border-r border-[#dadada]"></div>
      <button class="ml-[28px] font-bold">页-1</button>
      <button aria-label="添加页" class="ml-[34px]"><svg class="size-3 fill-none stroke-[#333] stroke-2" viewBox="0 0 12 12"><path d="M6 1v10M1 6h10"/></svg></button>
      <div class="ml-auto flex items-center pr-[31px]">
        <button aria-label="播放"><svg class="size-[18px] fill-none stroke-[#333] stroke-2"><use href="#play"/></svg></button>
        <button aria-label="缩小" class="ml-2.5"><svg class="size-3 fill-none stroke-[#333] stroke-2" viewBox="0 0 12 12"><path d="M1 6h10"/></svg></button>
        <input type="range" aria-label="缩放" min="0" max="100" value="11" class="ml-1.5 h-1 w-[82px] appearance-none rounded-full bg-[#d9d9d9] [&::-webkit-slider-thumb]:size-3 [&::-webkit-slider-thumb]:appearance-none [&::-webkit-slider-thumb]:rounded-full [&::-webkit-slider-thumb]:border-2 [&::-webkit-slider-thumb]:border-[#aaa] [&::-webkit-slider-thumb]:bg-white">
        <button aria-label="放大" class="ml-1.5"><svg class="size-3 fill-none stroke-[#333] stroke-2" viewBox="0 0 12 12"><path d="M6 1v10M1 6h10"/></svg></button>
        <button class="ml-[17px] flex items-center gap-[9px]">51%<svg class="h-1 w-2 text-[#777]"><use href="#caret"/></svg></button>
        <button aria-label="全屏" class="ml-[17px]"><svg class="size-4 fill-none stroke-[#333] stroke-2"><use href="#full"/></svg></button>
        <button aria-label="适应宽度" class="ml-[7px]"><svg class="size-4 fill-none stroke-[#333] stroke-2"><use href="#fit"/></svg></button>
      </div>
    </footer>
  </div>
</div>

<script>
const $ = id => document.getElementById(id);

const shapes = [
  '<path d="M5 5h39v39H5z"/>', '<path d="M3.500 12.500h42v24h-42z"/>', '<circle cx="24.500" cy="24.500" r="19"/>', '<rect x="5" y="5" width="39" height="39" rx="4"/>',
  '<rect x="4.500" y="13.500" width="39" height="23" rx="4"/>', '<rect x="3.500" y="12.500" width="42" height="24" rx="4"/>', '<path d="M4.500 13.500h30q10 0 10 10v12h-40z"/>', '<path d="M4.500 13.500h28q12 0 12 12v10h-28q-12 0-12-12z"/>',
  '<path d="M3.500 12.500h42v24h-42z" stroke="#555"/><path d="M8.500 16.500h32v16h-32z" fill="#e8e8e8"/>', '<path d="M24.500 7.500l20 34h-40z"/>', '<path d="M34.500 7.500l10 34H5.500z"/>', '<path d="M24.500 8.500l18 33h-36z"/>',
  '<path d="M12 5h25l7 7v25l-7 7H12l-7-7V12z"/>', '<path d="M24.500 6l19 15-7.500 21.500H13L5.500 21z"/>', '<path d="M24.500 5.500l19 19-19 19-19-19z"/>', '<ellipse cx="24.500" cy="24.500" rx="21" ry="14"/>',
  '<circle cx="24.500" cy="24.500" r="19"/><circle cx="24.500" cy="24.500" r="8.500" fill="#f4f4f4"/>', '<circle cx="24.500" cy="24.500" r="19"/><circle cx="24.500" cy="24.500" r="14.500" fill="#f4f4f4"/>', '<path d="M15.500 12.500h30l-12.500 24H3.500z"/>', '<path d="M14 12.500h21l10.500 24h-42z"/>',
  '<path d="M22 8.500q2.500-3 5 0l18 31H4z"/>', '<path d="M5.500 6.500v36h38z"/>', '<rect x="3.500" y="15.500" width="42" height="24" rx="12"/>', '<path d="M24.500 10.500l21 14-21 14-21-14z"/>'
];
$('shapes').innerHTML = shapes.map(s => `<button aria-label="形状"><svg class="size-[49px] fill-white stroke-[#8a8a8a]" viewBox="0 0 49 49">${s}</svg></button>`).join('');

/* Theme cards: diamond, parallelogram and box as [fill, stroke], then the two connectors */
const themes = [
  {d: ['#fff', '#1f5c74'], p: ['#fff', '#7a6428'], b: ['#fff', '#555'], a: '#1f5c74', c: '#444', w: 1.2},
  {d: ['#6b83a4', '#6b83a4'], p: ['#d8b884', '#d8b884'], b: ['#86acbc', '#86acbc'], a: '#566b84', c: '#64808f', w: 1.2, round: true},
  {d: ['#efedf8', '#9186cb'], p: ['#e9f0f9', '#719bc7'], b: ['#e9edf8', '#6a80c0'], a: '#6a5f9e', c: '#4a5a98', w: 2, round: true},
  {d: ['#9ccab8', '#7fae9c'], p: ['#a8ccd5', '#84a8b0'], b: ['#98b898', '#7d9c7d'], a: '#78a090', c: '#6a8a6e', w: 1.2, round: true},
  {d: ['#fff', '#5272b2'], p: ['#fff', '#bf7688'], b: ['#fff', '#7094ae'], a: '#3a5390', c: '#4f6f84', w: 2, plain: true},
  {d: ['#2798cc', '#2798cc'], p: ['#e29c24', '#e29c24'], b: ['#3a5a9c', '#3a5a9c'], a: '#1d7090', c: '#2f4a86', w: 1.2, round: true, on: true}
];
$('themes').innerHTML = themes.map(t => `
<button aria-label="主题方案" class="${t.on ? 'h-[98px] bg-white outline-3 -outline-offset-3 outline-[#dedede]' : 'h-[98px] border border-[#dedede] bg-white'}">
<svg class="h-24 w-[118px] fill-none" viewBox="1 1 118 96" stroke-linejoin="round" stroke-width="${t.w}">
<path d="M39 41v${t.plain ? 22 : 18}" stroke="${t.a}"/>${t.plain ? '' : `<path d="M35.500 57h7L39 63z" fill="${t.a}"/>`}
<path d="${t.round ? 'M55 72.500h26q7 0 7-7V58' : 'M55 72.500h33V55'}" stroke="${t.c}"/>${t.plain ? '' : `<path d="M84.500 60h7L88 54z" fill="${t.c}"/>`}
<path d="M37 19.300q2-1.300 4 0l15 9q1.500 1 0 2l-15 8.500q-2 1.300-4 0l-15-8.500q-1.500-1 0-2z" fill="${t.d[0]}" stroke="${t.d[1]}"/>
<path d="M80 35h24q3 0 2 3l-5 13q-1.500 3.500-4 3.500H72q-3 0-2-3l5-13q1.500-3.500 5-3.500z" fill="${t.p[0]}" stroke="${t.p[1]}"/>
<rect x="24" y="63" width="31" height="19" rx="3" fill="${t.b[0]}" stroke="${t.b[1]}"/></svg></button>`).join('');

/* Rulers: a labelled tick every 20 mm, a short one half way */
const step = 38.55;
let h = '', v = '';
for (let i = -1; i <= 15; i++) {
  const x = Math.round(25 + i * step) + .5, xm = Math.round(25 + (i + .5) * step) + .5;
  h += `<path d="M${x} 0v16M${xm} 9v7" stroke="#d6d6d6"/><text x="${x + 1}" y="10" fill="#777">${i * 20}</text>`;
}
for (let i = -2; i <= 11; i++) {
  const y = Math.round(65 + i * step) + .5, ym = Math.round(65 + (i + .5) * step) + .5;
  v += `<path d="M0 ${y}h17M10 ${ym}h7" stroke="#d6d6d6"/><text transform="translate(10 ${y + 2}) rotate(-90)" text-anchor="end" fill="#777">${i * 20}</text>`;
}
$('hruler').innerHTML = h;
$('vruler').innerHTML = v;

const colors = 'b80a20 e00020 c84a80 f05068 f06060 e85ca0 e098b8 f08880 f090a0 ff9870 f0a890 f5b8b8 e8d0e6 fcd0e2 fce0e6 0a1f50 1f3a70 3f2f85 004a90 0068b0 3f68b0 5080c8 0080d0 0090d8 2ea8e8 00b0f0 33c0f5 8cc0ee a2d6ee d0eaf5 004538 005a30 0a6e5e 5a6e2e 0a7a4a 1d9a4a 00b0a0 5ac2c0 1dc8b0 3fb57f 00b050 7fb80e a5d060 bfd83a cfe6c0 e64a19 ef6c00 f08300 f5a058 fba800 ffab00 fdb933 fcc82e ffd900 ffea00 fff07a fdd070 ead09c fddcae fde8d0 7c3270 8b4290 6b3fa0 75559c 9868a2 a05a8c cf7bb2 a998d6 c8a8cc eec0d8 5a2d1f 7a3e2e 9b5130 a85a2a bf7540 b08468 deb887 d3ccc6 ccd4cc 000000 3e3a39 595757 717171 898989 a0a0a0 b5b5b5 cfcfcf dcdcdc eeeeee ffffff'.split(' ');
$('swatches').innerHTML = colors.map(c => `<button aria-label="#${c}" class="flex-1 border-r border-[#f4f4f4]" style="background-color:#${c}"></button>`).join('');
</script>
</body>
</html>
